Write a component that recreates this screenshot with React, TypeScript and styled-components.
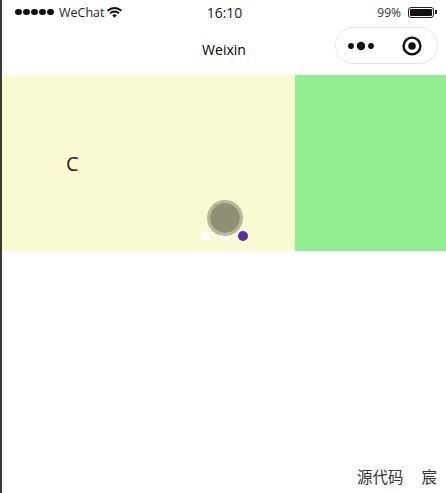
import * as React from "react";
import styled, { createGlobalStyle } from "styled-components";

const GlobalStyle = createGlobalStyle`
  html, body {
    margin: 0;
    padding: 0;
    background: #fff;
  }
  body {
    font-family: "Open Sans", "Noto Sans CJK SC", sans-serif;
  }
`;

const App: React.FC = () => {
  return (
    <>
      <GlobalStyle />
      <Page>
        <Edge />
        <Phone>
          <StatusBar>
            <StatusLeft>
              <Signal>
                {[0, 1, 2, 3, 4].map((i) => (
                  <SignalDot key={i} />
                ))}
              </Signal>
              <Carrier>WeChat</Carrier>
              <svg width="15" height="11" viewBox="0 0 15 11">
                <path d="M0.6 3.8 A10 10 0 0 1 14.4 3.8" fill="none" stroke="#111" strokeWidth="1.9" />
                <path d="M3 6.2 A6.6 6.6 0 0 1 12 6.2" fill="none" stroke="#111" strokeWidth="1.9" />
                <path d="M5.2 8.2 A3.4 3.4 0 0 1 9.8 8.2 L7.5 10.8 Z" fill="#111" />
              </svg>
            </StatusLeft>
            <Clock>16:10</Clock>
            <StatusRight>
              <Percent>99%</Percent>
              <Battery>
                <BatteryFill />
              </Battery>
              <BatteryTip />
            </StatusRight>
          </StatusBar>
          <NavBar>
            <NavTitle>Weixin</NavTitle>
            <Capsule>
              <svg width="26" height="10" viewBox="0 0 26 10">
                <circle cx="3" cy="5" r="2.9" fill="#111" />
                <circle cx="13" cy="5" r="4.2" fill="#111" />
                <circle cx="23" cy="5" r="2.9" fill="#111" />
              </svg>
              <svg width="20" height="20" viewBox="0 0 20 20">
                <circle cx="10" cy="10" r="8.4" fill="none" stroke="#111" strokeWidth="2.4" />
                <circle cx="10" cy="10" r="3.8" fill="#111" />
              </svg>
            </Capsule>
          </NavBar>
          <Swiper>
            <Slide $color="#fafad2" $width={293}>
              <SlideLabel>C</SlideLabel>
              <Ripple />
              <Dots>
                <Dot $color="#fff" />
                <Dot $color="#fff" />
                <Dot $color="#5a2ea6" />
              </Dots>
            </Slide>
            <Slide $color="#90ee90" />
          </Swiper>
          <Footer>
            <FooterLink>源代码</FooterLink>
            <FooterLink>宸</FooterLink>
          </Footer>
        </Phone>
      </Page>
    </>
  );
};

const Page = styled.div`
  display: flex;
  width: 446px;
  height: 493px;
  overflow: hidden;
`;

const Edge = styled.div`
  width: 2px;
  flex-shrink: 0;
  background-color: #3a3a3a;
`;

const Phone = styled.div`
  flex: 1;
  display: flex;
  flex-direction: column;
  min-width: 0;
`;

const StatusBar = styled.div`
  display: grid;
  grid-template-columns: 1fr auto 1fr;
  align-items: center;
  height: 24px;
  padding: 0 9px 0 13px;
  color: #222;
`;

const StatusLeft = styled.div`
  display: flex;
  align-items: center;
`;

const Signal = styled.div`
  display: flex;
  gap: 1.5px;
  margin-right: 5.5px;
`;

const SignalDot = styled.span`
  width: 6.5px;
  height: 6px;
  border-radius: 50%;
  background-color: #111;
`;

const Carrier = styled.span`
  font-size: 12.5px;
  margin-right: 2px;
`;

const Clock = styled.span`
  font-size: 14px;
  margin-right: 3px;
`;

const StatusRight = styled.div`
  display: flex;
  align-items: center;
  justify-content: flex-end;
`;

const Percent = styled.span`
  font-size: 12px;
  margin-right: 7px;
  color: #333;
`;

const Battery = styled.div`
  width: 26px;
  height: 11px;
  padding: 1px;
  box-sizing: border-box;
  border: 1px solid #222;
  border-radius: 3px;
`;

const BatteryFill = styled.div`
  width: 100%;
  height: 100%;
  border-radius: 1px;
  background-color: #111;
`;

const BatteryTip = styled.div`
  width: 2px;
  height: 4px;
  margin-left: 1px;
  background-color: #222;
`;

const NavBar = styled.div`
  position: relative;
  display: flex;
  align-items: center;
  justify-content: center;
  height: 51px;
`;

const NavTitle = styled.span`
  font-family: "Open Sans", sans-serif;
  font-size: 14px;
  color: #000;
  margin-bottom: 1px;
`;

const Capsule = styled.div`
  position: absolute;
  top: 3px;
  right: 8px;
  display: flex;
  align-items: center;
  justify-content: space-between;
  box-sizing: border-box;
  width: 103px;
  height: 37px;
  padding: 0 15px 0 12px;
  border: 1px solid #e6e6e6;
  border-radius: 19px;
  background-color: #fff;
`;

const Swiper = styled.div`
  display: flex;
  height: 176px;
`;

const Slide = styled.div<{ $color: string; $width?: number }>`
  position: relative;
  flex: ${(p) => (p.$width ? `0 0 ${p.$width}px` : "1")};
  background-color: ${(p) => p.$color};
`;

const SlideLabel = styled.span`
  position: absolute;
  left: 64px;
  top: 76px;
  font-size: 20px;
  line-height: 26px;
  color: #222;
`;

const Dots = styled.div`
  position: absolute;
  left: 199px;
  bottom: 10px;
  display: flex;
  gap: 8.5px;
`;

const Dot = styled.span<{ $color: string }>`
  width: 10px;
  height: 10px;
  border-radius: 50%;
  background-color: ${(p) => p.$color};
`;

const Ripple = styled.div`
  position: absolute;
  z-index: 1;
  left: 205px;
  top: 125px;
  width: 36px;
  height: 36px;
  box-sizing: border-box;
  border: 3px solid rgba(130, 130, 105, 0.55);
  border-radius: 50%;
  background-clip: padding-box;
  background-color: #8f8f73;
  filter: blur(0.5px);
`;

const Footer = styled.div`
  margin-top: auto;
  display: flex;
  justify-content: flex-end;
  gap: 18px;
  padding: 0 9px 7px 0;
`;

const FooterLink = styled.span`
  font-family: "Noto Sans CJK SC", sans-serif;
  font-size: 15.5px;
  line-height: 20px;
  color: #333;
`;

export default App;
